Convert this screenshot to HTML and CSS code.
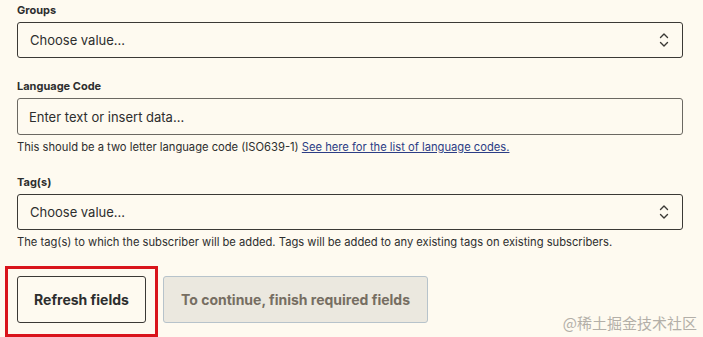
FILE: index.html
```html
<!DOCTYPE html>
<html lang="en">
<head>
  <meta charset="UTF-8" />
  <meta name="viewport" content="width=device-width, initial-scale=1.0"/>
  <title>Action Fields</title>
  <link rel="stylesheet" href="styles.css">
</head>
<body>
  <main class="fields">
    <div class="field">
      <label class="field-label">Groups</label>
      <div class="select-box">
        <span class="select-text">Choose value...</span>
        <svg class="chevrons" width="10" height="16" viewBox="0 0 10 16">
          <path d="M1.5 5.5 L5 2 L8.5 5.5" />
          <path d="M1.5 10.5 L5 14 L8.5 10.5" />
        </svg>
      </div>
    </div>

    <div class="field">
      <label class="field-label">Language Code</label>
      <div class="text-box">
        <span class="select-text">Enter text or insert data...</span>
      </div>
      <p class="help">This should be a two letter language code (ISO639-1) <a href="#" class="help-link">See here for the list of language codes.</a></p>
    </div>

    <div class="field">
      <label class="field-label">Tag(s)</label>
      <div class="select-box">
        <span class="select-text">Choose value...</span>
        <svg class="chevrons" width="10" height="16" viewBox="0 0 10 16">
          <path d="M1.5 5.5 L5 2 L8.5 5.5" />
          <path d="M1.5 10.5 L5 14 L8.5 10.5" />
        </svg>
      </div>
      <p class="help">The tag(s) to which the subscriber will be added. Tags will be added to any existing tags on existing subscribers.</p>
    </div>

    <div class="button-row">
      <span class="highlight">
        <button class="btn btn-refresh">Refresh fields</button>
      </span>
      <button class="btn btn-disabled" disabled>To continue, finish required fields</button>
    </div>
  </main>

  <span class="watermark">@稀土掘金技术社区</span>
</body>
</html>
```

FILE: styles.css
```css
body {
  font-family: "Inter", "Noto Sans", sans-serif;
  margin: 0;
  padding: 0;
  background-color: #fefaf0;
  color: #2d2e2e;
  width: 703px;
  height: 337px;
  overflow: hidden;
  position: relative;
}

.fields {
  padding: 2px 20px 0 17px;
}

.field {
  margin-bottom: 19px;
}

.field:first-child {
  margin-bottom: 20px;
}

.field-label {
  display: block;
  font-size: 11px;
  font-weight: 700;
  line-height: 16px;
  margin-bottom: 4px;
}

.select-box,
.text-box {
  height: 36px;
  box-sizing: border-box;
  border: 1px solid #3b3935;
  border-radius: 3px;
  display: flex;
  align-items: center;
  justify-content: space-between;
  padding: 0 13px 0 12px;
}

.text-box {
  height: 37px;
  border-color: #6b6862;
  padding-left: 11px;
}

.select-text {
  font-size: 13px;
  color: #2d2e2e;
}

.chevrons {
  fill: none;
  stroke: #3b3935;
  stroke-width: 1.4;
  stroke-linecap: round;
  stroke-linejoin: round;
}

.help {
  font-size: 11.2px;
  line-height: 16px;
  margin: 4px 0 0;
}

.help-link {
  color: #2c3d85;
}

.button-row {
  display: flex;
  gap: 17px;
  margin-top: 26px;
}

.highlight {
  position: relative;
  display: flex;
}

.highlight::after {
  content: "";
  position: absolute;
  left: -12px;
  right: -12px;
  top: -10px;
  bottom: -14px;
  border: 3px solid #d9141b;
}

.btn {
  font-family: "Inter", "Noto Sans", sans-serif;
  font-size: 14px;
  font-weight: 700;
  height: 47px;
  border-radius: 3px;
  padding: 0 16px;
}

.btn-refresh {
  width: 129px;
  background: #fefaf0;
  border: 1px solid #3b3935;
  color: #2d2e2e;
  cursor: pointer;
}

.btn-disabled {
  width: 265px;
  background: #ebe8df;
  border: 1px solid #b7c3cb;
  color: #766e62;
}

.watermark {
  position: absolute;
  right: 6px;
  bottom: 4px;
  font-family: "Noto Sans CJK SC", sans-serif;
  font-size: 15px;
  color: #b3afa8;
}
```
